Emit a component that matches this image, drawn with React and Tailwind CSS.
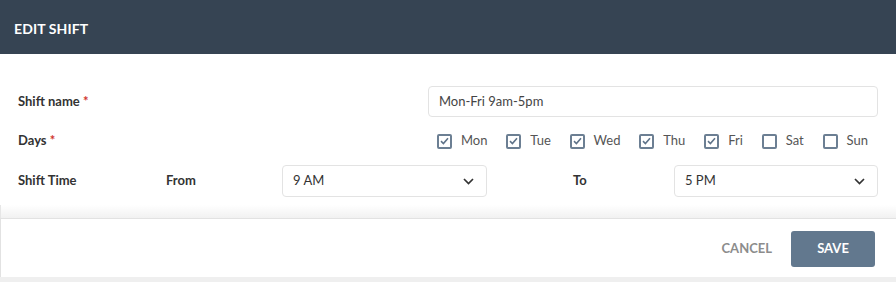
const days = [
  { name: 'Mon', on: true },
  { name: 'Tue', on: true },
  { name: 'Wed', on: true },
  { name: 'Thu', on: true },
  { name: 'Fri', on: true },
  { name: 'Sat', on: false },
  { name: 'Sun', on: false },
]

const Check = ({ on }) => (
  <span className="w-[15px] h-[15px] border-2 border-[#6c7f93] rounded-[2px] flex items-center justify-center">
    {on && (
      <svg width="9" height="8" viewBox="0 0 9 8" fill="none">
        <path d="M1 4.2 L3.4 6.5 L8 1.3" stroke="#5f7389" strokeWidth="1.6" />
      </svg>
    )}
  </span>
)

const Chevron = () => (
  <svg width="11" height="7" viewBox="0 0 11 7" fill="none">
    <path d="M1 1 L5.5 5.5 L10 1" stroke="#333" strokeWidth="1.7" />
  </svg>
)

const Select = ({ value }) => (
  <div className="h-[32px] border border-[#e3e3e3] rounded-[4px] flex items-center justify-between pl-[10px] pr-[12px] text-[13px] text-[#333]">
    <span>{value}</span>
    <Chevron />
  </div>
)

export default function App() {
  return (
    <div className="w-[896px] h-[282px] bg-[#efefef] font-['Lato','Liberation_Sans',sans-serif] flex flex-col">
      {/* Header */}
      <div className="h-[54px] bg-[#364453] flex items-center px-[14px] pt-[2px] shrink-0">
        <h2 className="text-white font-bold text-[14px] tracking-[0.1px]">EDIT SHIFT</h2>
      </div>

      {/* Body */}
      <div className="bg-white pt-[32px] pl-[18px] pr-[18px] pb-[8px]">
        <div className="flex items-center h-[31px]">
          <label className="w-[410px] text-[13px] font-bold text-[#333]">
            Shift name <span className="text-[#d0342c]">*</span>
          </label>
          <div className="flex-1 h-[31px] border border-[#e3e3e3] rounded-[4px] flex items-center px-[10px] text-[13px] text-[#444]">
            Mon-Fri 9am-5pm
          </div>
        </div>

        <div className="flex items-center h-[16px] mt-[16px]">
          <label className="w-[410px] text-[13px] font-bold text-[#333]">
            Days <span className="text-[#d0342c]">*</span>
          </label>
          <div className="flex-1 flex items-center justify-between pl-[9px] pr-[10px]">
            {days.map((d) => (
              <div key={d.name} className="flex items-center gap-[9px]">
                <Check on={d.on} />
                <span className="text-[13px] text-[#555]">{d.name}</span>
              </div>
            ))}
          </div>
        </div>

        <div className="flex items-center h-[32px] mt-[16px] text-[13px] font-bold text-[#333]">
          <span className="w-[148px]">Shift Time</span>
          <span className="w-[116px]">From</span>
          <div className="w-[205px] font-normal"><Select value="9 AM" /></div>
          <span className="w-[187px] pl-[86px]">To</span>
          <div className="flex-1 font-normal"><Select value="5 PM" /></div>
        </div>
      </div>

      {/* Shade */}
      <div className="h-[13px] bg-gradient-to-b from-white to-[#f1f1f1] border-l border-[#e6e6e6]" />

      {/* Footer */}
      <div className="h-[59px] bg-white border-t border-l border-[#e2e2e2] flex items-center justify-end pr-[21px] pt-[2px] gap-[19px]">
        <button className="text-[13px] font-bold text-[#8c8c8c]">CANCEL</button>
        <button className="w-[84px] h-[36px] bg-[#62788e] rounded-[3px] text-white text-[13px] font-bold">SAVE</button>
      </div>
    </div>
  )
}
